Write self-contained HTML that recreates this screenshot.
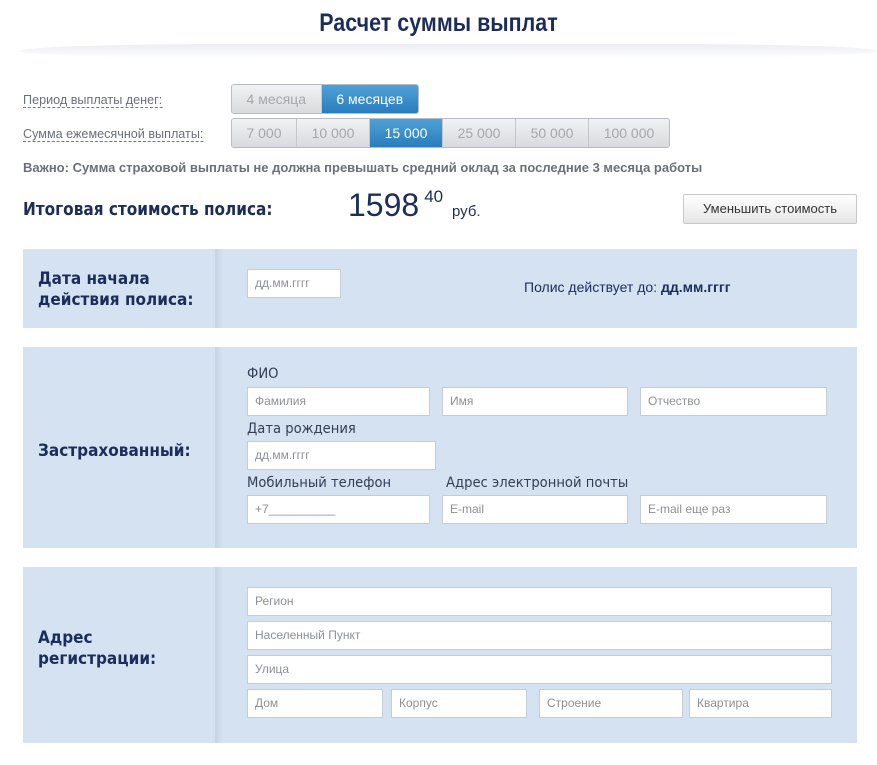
<!DOCTYPE html>
<html><head><meta charset="utf-8"><style>
*{margin:0;padding:0;box-sizing:border-box}
body{width:877px;height:765px;background:#fff;font-family:"Liberation Sans",sans-serif;position:relative;overflow:hidden}
.abs{position:absolute}
h1{position:absolute;left:0;width:877px;top:9px;text-align:center;font-size:25px;font-weight:bold;color:#1c2d5a;transform:scaleX(0.86)}
.shadow{position:absolute;left:20px;width:857px;top:44px;height:14px;background:linear-gradient(#e6e8ec,#fff);border-radius:50%/100%;opacity:.8}
.lbl{position:absolute;left:23px;font-size:13px;color:#6b6f78;border-bottom:1px dashed #777;line-height:15px;transform:scaleX(.97);transform-origin:left}
.seg{position:absolute;display:flex;border:1px solid #b8bcc2;border-radius:3px;overflow:hidden;height:30px}
.seg div{height:28px;line-height:28px;text-align:center;font-size:14px;color:#a4a8ae;background:linear-gradient(#f1f2f3,#d8dadd);border-right:1px solid #c4c7cb}
.seg div:last-child{border-right:none}
.seg .on{background:linear-gradient(#4ea1d6,#2a7dbd);color:#fff}
.panel{position:absolute;left:23px;width:834px;background:#d4e2f1}
.panel .div{position:absolute;left:192px;top:0;bottom:0;width:8px;background:linear-gradient(90deg,rgba(170,185,205,.35),rgba(212,226,241,0))}
.pl{position:absolute;left:15px;font-size:17px;font-weight:bold;color:#1c2d5a;font-family:"DejaVu Sans",sans-serif;line-height:21px;transform:scaleX(.9);transform-origin:left}
.in{position:absolute;background:#fff;border:1px solid #c5ccd4;height:29px;font-size:12px;color:#8c9096;padding-left:7px;line-height:27px}
.fl{position:absolute;font-size:14px;color:#333d55;font-family:"DejaVu Sans",sans-serif;transform:scaleX(.94);transform-origin:left}
</style></head><body>
<h1>Расчет суммы выплат</h1>
<div class="shadow"></div>
<div class="lbl" style="top:92px">Период выплаты денег:</div>
<div class="lbl" style="top:126px">Сумма ежемесячной выплаты:</div>
<div class="seg" style="left:231px;top:84px;width:188px"><div style="width:90px">4 месяца</div><div class="on" style="width:97px">6 месяцев</div></div>
<div class="seg" style="left:231px;top:118px;width:439px"><div style="width:65px">7 000</div><div style="width:73px">10 000</div><div class="on" style="width:73px">15 000</div><div style="width:73px">25 000</div><div style="width:73px">50 000</div><div style="width:80px">100 000</div></div>
<div class="abs" style="left:23px;top:160px;font-size:13px;font-weight:bold;color:#6b6f78">Важно: Сумма страховой выплаты не должна превышать средний оклад за последние 3 месяца работы</div>
<div class="abs" style="left:23px;top:199px;font-size:18px;font-weight:bold;color:#1c2d5a;font-family:'DejaVu Sans',sans-serif;transform:scaleX(.85);transform-origin:left">Итоговая стоимость полиса:</div>
<div class="abs" style="left:348px;top:187px;font-size:32px;color:#1c2d5a">1598<sup style="font-size:17px;vertical-align:14px;margin-left:5px">40</sup> <span style="font-size:15px">руб.</span></div>
<div class="abs" style="left:683px;top:194px;width:174px;height:30px;border:1px solid #c8c8c8;border-radius:2px;background:linear-gradient(#fff,#e6e6e6);font-size:13px;color:#333;text-align:center;line-height:28px">Уменьшить стоимость</div>

<div class="panel" style="top:249px;height:79px"><div class="div"></div>
<div class="pl" style="top:20px">Дата начала<br>действия полиса:</div></div>
<div class="in" style="left:247px;top:269px;width:94px">дд.мм.гггг</div>
<div class="abs" style="left:524px;top:279px;font-size:14px;color:#1c2d5a">Полис действует до: <b>дд.мм.гггг</b></div>

<div class="panel" style="top:347px;height:201px"><div class="div"></div>
<div class="pl" style="top:94px">Застрахованный:</div></div>
<div class="fl" style="left:247px;top:366px">ФИО</div>
<div class="in" style="left:247px;top:387px;width:183px">Фамилия</div>
<div class="in" style="left:442px;top:387px;width:186px">Имя</div>
<div class="in" style="left:640px;top:387px;width:187px">Отчество</div>
<div class="fl" style="left:247px;top:421px">Дата рождения</div>
<div class="in" style="left:247px;top:441px;width:189px">дд.мм.гггг</div>
<div class="fl" style="left:247px;top:475px">Мобильный телефон</div>
<div class="fl" style="left:446px;top:475px">Адрес электронной почты</div>
<div class="in" style="left:247px;top:495px;width:183px">+7__________</div>
<div class="in" style="left:442px;top:495px;width:186px">E-mail</div>
<div class="in" style="left:640px;top:495px;width:187px">E-mail еще раз</div>

<div class="panel" style="top:567px;height:176px"><div class="div"></div>
<div class="pl" style="top:61px">Адрес<br>регистрации:</div></div>
<div class="in" style="left:247px;top:587px;width:585px">Регион</div>
<div class="in" style="left:247px;top:621px;width:585px">Населенный Пункт</div>
<div class="in" style="left:247px;top:655px;width:585px">Улица</div>
<div class="in" style="left:247px;top:689px;width:136px">Дом</div>
<div class="in" style="left:391px;top:689px;width:136px">Корпус</div>
<div class="in" style="left:539px;top:689px;width:144px">Строение</div>
<div class="in" style="left:689px;top:689px;width:143px">Квартира</div>
</body></html>
